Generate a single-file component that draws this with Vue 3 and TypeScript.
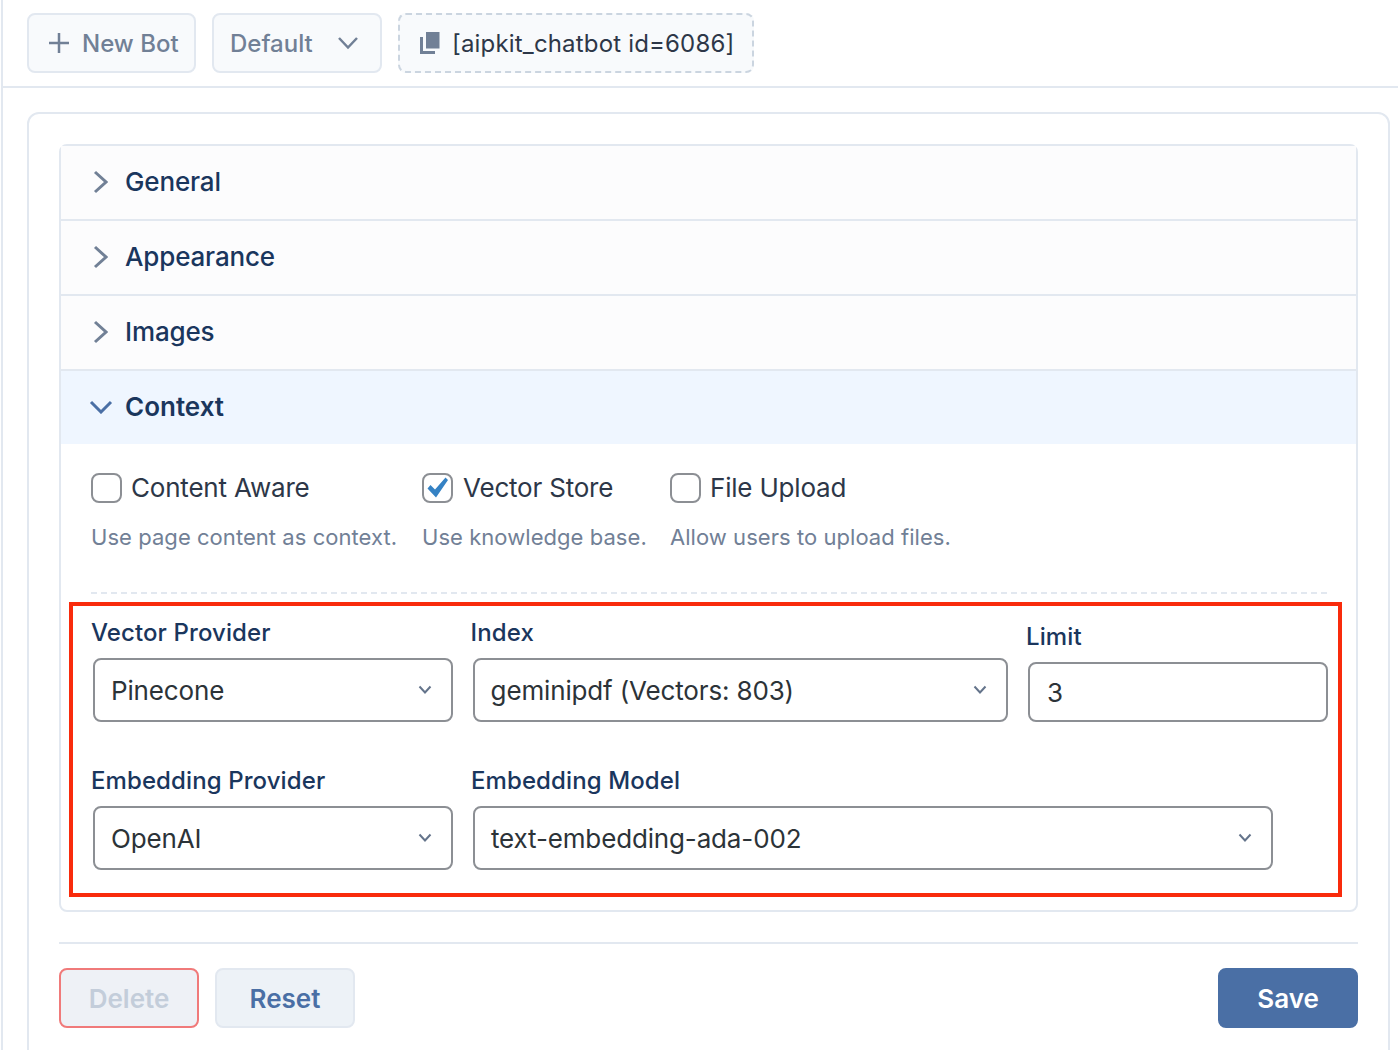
<script setup lang="ts">
const collapsed: string[] = ['General', 'Appearance', 'Images']
const options = [
  { label: 'Content Aware', hint: 'Use page content as context.', checked: false, cls: 'opt-a' },
  { label: 'Vector Store', hint: 'Use knowledge base.', checked: true, cls: 'opt-b' },
  { label: 'File Upload', hint: 'Allow users to upload files.', checked: false, cls: 'opt-c' },
]
</script>

<template>
  <div class="page">
    <header class="toolbar">
      <button class="tool tool-new">
        <svg class="plus" width="22" height="22" viewBox="0 0 22 22"><path d="M11 1v20M1 11h20" /></svg>
        <span>New Bot</span>
      </button>
      <button class="tool tool-default">
        <span>Default</span>
        <svg class="tool-chev" width="22" height="14" viewBox="0 0 22 14"><path d="M2 2l9 9.500L20 2" /></svg>
      </button>
      <div class="tool tool-code">
        <svg width="20" height="22" viewBox="0 0 20 22"><path d="M6 0h13.500v16.500H6z" fill="#718096" /><path d="M1.500 5v15.500H15" fill="none" stroke="#718096" stroke-width="3" /></svg>
        <span>[aipkit_chatbot id=6086]</span>
      </div>
    </header>

    <main class="main">
      <section class="card">
        <div class="accordion">
          <div v-for="name in collapsed" :key="name" class="acc-row">
            <svg class="acc-icon" width="16" height="24" viewBox="0 0 16 24"><path d="M3 2l11 10L3 22" /></svg>
            <span>{{ name }}</span>
          </div>
          <div class="acc-row acc-open">
            <svg class="acc-icon-open" width="24" height="14" viewBox="0 0 24 14"><path d="M2 2l10 10L22 2" /></svg>
            <span>Context</span>
          </div>

          <div class="acc-body">
            <div class="opts">
              <div v-for="o in options" :key="o.label" class="opt" :class="o.cls">
                <div class="opt-line">
                  <span class="box">
                    <svg v-if="o.checked" width="27" height="26" viewBox="0 0 27 26"><path d="M3.500 13.500l3-3.500 4.500 4.500L21.500 2.500l2.500 2.500-12 17.500z" fill="#3582c4" /></svg>
                  </span>
                  <span class="opt-label">{{ o.label }}</span>
                </div>
                <p class="opt-hint">{{ o.hint }}</p>
              </div>
            </div>
            <div class="dash"></div>

            <div class="fields">
              <div class="field-row">
                <div class="field f-left">
                  <label>Vector Provider</label>
                  <div class="select">
                    <span>Pinecone</span>
                    <svg width="14" height="10" viewBox="0 0 14 10"><path d="M1.500 1.500L7 7.500l5.500-6" /></svg>
                  </div>
                </div>
                <div class="field f-index">
                  <label>Index</label>
                  <div class="select">
                    <span>geminipdf (Vectors: 803)</span>
                    <svg width="14" height="10" viewBox="0 0 14 10"><path d="M1.500 1.500L7 7.500l5.500-6" /></svg>
                  </div>
                </div>
                <div class="field f-limit">
                  <label>Limit</label>
                  <div class="input">3</div>
                </div>
              </div>
              <div class="field-row row-two">
                <div class="field f-left">
                  <label>Embedding Provider</label>
                  <div class="select">
                    <span>OpenAI</span>
                    <svg width="14" height="10" viewBox="0 0 14 10"><path d="M1.500 1.500L7 7.500l5.500-6" /></svg>
                  </div>
                </div>
                <div class="field f-model">
                  <label>Embedding Model</label>
                  <div class="select">
                    <span>text-embedding-ada-002</span>
                    <svg width="14" height="10" viewBox="0 0 14 10"><path d="M1.500 1.500L7 7.500l5.500-6" /></svg>
                  </div>
                </div>
              </div>
              <div class="highlight"></div>
            </div>
          </div>
        </div>

        <footer class="actions">
          <button class="btn btn-delete">Delete</button>
          <button class="btn btn-reset">Reset</button>
          <button class="btn btn-save">Save</button>
        </footer>
      </section>
    </main>
  </div>
</template>

<style>
html, body { margin: 0; background: #fff; overflow: hidden; }
</style>

<style scoped>
* { box-sizing: border-box; }
.page {
  width: 1397px;
  height: 1050px;
  overflow: hidden;
  margin-left: 1px;
  border-left: 2px solid #e2e8f0;
  font-family: Inter, "Liberation Sans", sans-serif;
  color: #2c3338;
  background: #fff;
}
.toolbar {
  height: 88px;
  display: flex;
  gap: 16px;
  padding: 13px 0 0 24px;
  border-bottom: 2px solid #e2e8f0;
}
.tool {
  height: 60px;
  display: flex;
  align-items: center;
  border: 2px solid #e2e8f0;
  border-radius: 8px;
  background: #f8fafc;
  color: #718096;
  font: 500 24px Inter, sans-serif;
  padding: 0;
}
.tool-new { width: 169px; padding-left: 19px; gap: 12px; }
.plus path { stroke: #718096; stroke-width: 2.500; fill: none; }
.tool-default { width: 170px; padding-left: 16px; justify-content: flex-start; }
.tool-chev { margin-left: 24px; }
.tool-chev path { stroke: #718096; stroke-width: 2.500; fill: none; }
.tool-code {
  width: 356px;
  padding-left: 20px;
  gap: 12px;
  border-style: dashed;
  border-color: #cbd5e0;
  color: #2d3748;
  font-weight: 400;
  letter-spacing: 0.17px;
}
.main { padding: 24px 7px 0 24px; }
.card {
  width: 1363px;
  height: 1000px;
  border: 2px solid #e2e8f0;
  border-radius: 12px;
  padding: 30px 30px 0;
  background: #fff;
}
.accordion {
  border: 2px solid #e2e8f0;
  border-radius: 8px;
  height: 768px;
}
.acc-row {
  height: 75px;
  display: flex;
  align-items: center;
  padding-left: 31px;
  padding-bottom: 2px;
  gap: 17px;
  background: #fcfcfd;
  border-bottom: 2px solid #e2e8f0;
  color: #1a365d;
  font-size: 26px;
  font-weight: 500;
  letter-spacing: -0.15px;
}
.acc-icon path { stroke: #718096; stroke-width: 3; fill: none; }
.acc-open {
  height: 73px;
  padding-left: 28px;
  gap: 12px;
  background: #eff6ff;
  border-bottom: 0;
  font-weight: 600;
  letter-spacing: 0;
}
.acc-icon-open path { stroke: #4a6fa5; stroke-width: 3; fill: none; }
.acc-body { padding: 29px 29px 0 30px; }
.opts { display: flex; height: 119px; }
.opt-a { width: 331px; }
.opt-b { width: 248px; }
.opt-line { display: flex; align-items: center; gap: 9px; height: 30px; }
.opt-b .opt-line { gap: 10px; }
.box {
  width: 31px;
  height: 30px;
  border: 2px solid #8c8f94;
  border-radius: 8px;
  background: #fff;
  display: flex;
  align-items: center;
  justify-content: center;
}
.opt-label { font-size: 26px; color: #2d3748; padding-bottom: 2px; letter-spacing: -0.2px; }
.opt-hint { margin: 19px 0 0; font-size: 22px; line-height: 30px; color: #718096; letter-spacing: 0.05px; }
.dash { border-top: 2px dashed #e2e8f0; width: 1236px; }
.fields { position: relative; padding-top: 24px; }
.field-row { display: flex; align-items: flex-end; }
.row-two { margin-top: 44px; }
label {
  display: block;
  font-size: 24px;
  line-height: 30px;
  font-weight: 500;
  color: #1a365d;
  letter-spacing: 0.1px;
}
.field label { margin-bottom: 10px; }
.select, .input {
  display: flex;
  align-items: center;
  justify-content: space-between;
  border: 2px solid #8c8f94;
  border-radius: 8px;
  background: #fff;
  font-size: 26px;
  color: #2c3338;
  padding: 0 19px 0 16px;
  letter-spacing: -0.15px;
}
.select { height: 64px; margin-left: 2px; }
.select svg path { stroke: #64748b; stroke-width: 2; fill: none; }
.input { height: 60px; margin-left: 1px; padding-left: 17px; }
.f-left { width: 380px; }
.f-left .select { width: 360px; }
.f-index { width: 556px; }
.f-index .select { width: 535px; }
.f-limit { width: 301px; }
.f-limit .input { width: 300px; margin-left: 2px; }
.f-model .select { width: 800px; }
.highlight {
  position: absolute;
  left: -22px;
  top: 8px;
  width: 1273px;
  height: 295px;
  border: 4px solid #f92b0c;
  pointer-events: none;
}
.actions {
  margin-top: 30px;
  border-top: 2px solid #e2e8f0;
  padding-top: 24px;
  display: flex;
  gap: 16px;
}
.btn {
  width: 140px;
  height: 60px;
  border-radius: 8px;
  border: 2px solid #e2e8f0;
  font: 600 26px Inter, sans-serif;
  padding: 0;
}
.btn-delete { background: #eef1f6; border-color: #f07a7a; color: #c3cdda; }
.btn-reset { background: #edf2f7; color: #4a6fa5; }
.btn-save { margin-left: auto; background: #4a6fa5; border-color: #4a6fa5; color: #fff; }
</style>
